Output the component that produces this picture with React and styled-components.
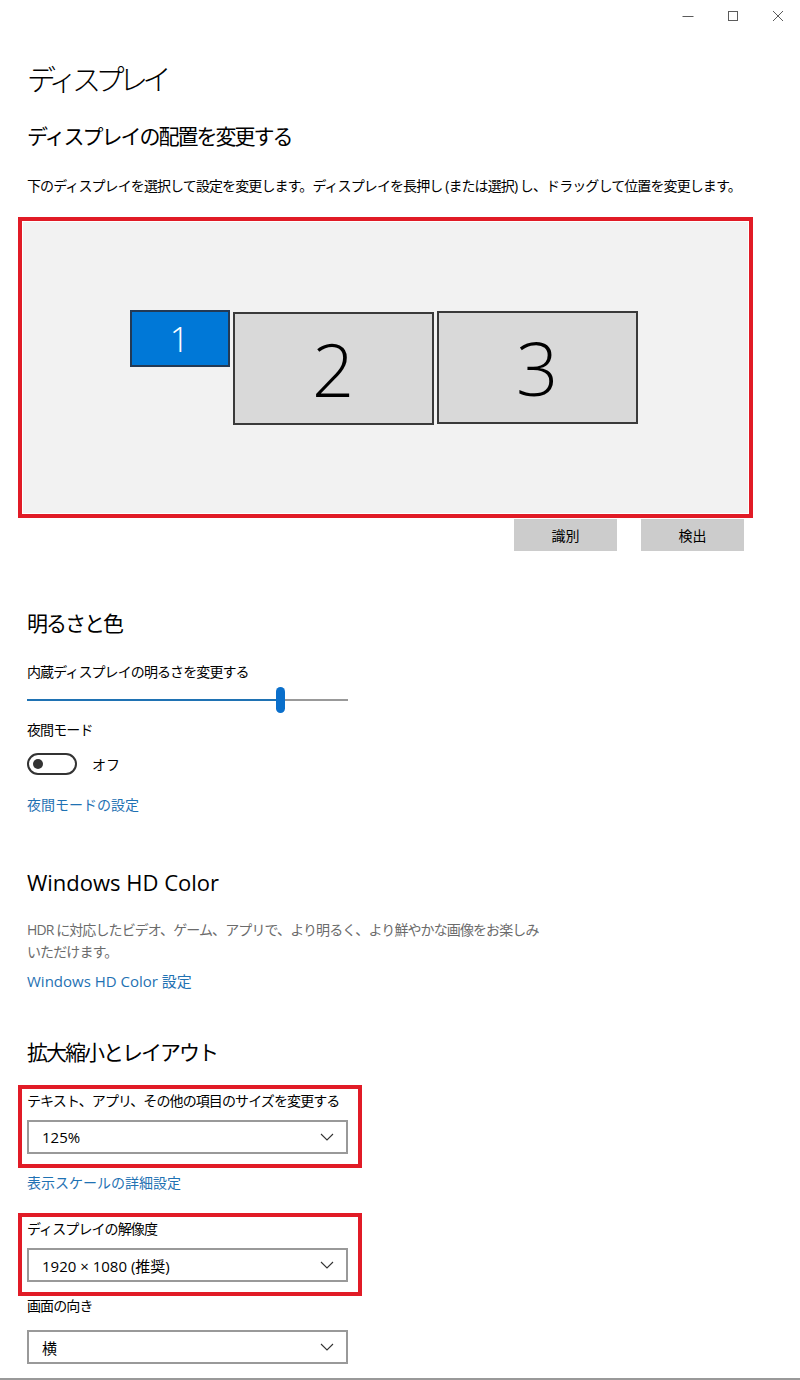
import React from 'react'
import styled, { createGlobalStyle } from 'styled-components'

const GlobalStyle = createGlobalStyle`
    html, body {
        margin: 0;
        padding: 0;
        background: #ffffff;
    }
    body {
        font-family: "Segoe UI", "Open Sans", "Noto Sans CJK JP", sans-serif;
        color: #000000;
    }
`

const font = `"Segoe UI", "Open Sans", "Noto Sans CJK JP", sans-serif`

function Display() {
    return (
        <>
            <GlobalStyle />
            <WindowStyled>
                <TitleBar>
                    <WinButton aria-label="minimize">
                        <svg width="12" height="12" viewBox="0 0 12 12">
                            <path d="M0.5 6.5h11" stroke="#333" strokeWidth="1" />
                        </svg>
                    </WinButton>
                    <WinButton aria-label="maximize">
                        <svg width="12" height="12" viewBox="0 0 12 12">
                            <rect x="1.5" y="1.5" width="9" height="9" fill="none" stroke="#333" strokeWidth="1" />
                        </svg>
                    </WinButton>
                    <WinButton aria-label="close">
                        <svg width="12" height="12" viewBox="0 0 12 12">
                            <path d="M1 1l10 10M11 1L1 11" stroke="#333" strokeWidth="1" />
                        </svg>
                    </WinButton>
                </TitleBar>

                <Content>
                    <PageTitle>ディスプレイ</PageTitle>
                    <Heading top={21}>ディスプレイの配置を変更する</Heading>
                    <Text top={25}>下のディスプレイを選択して設定を変更します。ディスプレイを長押し (または選択) し、ドラッグして位置を変更します。</Text>

                    <Highlight top={21}>
                        <Arrangement>
                            <Monitor selected w={100} h={57} size={34}>1</Monitor>
                            <Monitor w={201} h={113} size={74} offset={1}>2</Monitor>
                            <Monitor w={201} h={113} size={74}>3</Monitor>
                        </Arrangement>
                    </Highlight>
                    <ButtonRow>
                        <GreyButton>識別</GreyButton>
                        <GreyButton>検出</GreyButton>
                    </ButtonRow>

                    <Heading top={57}>明るさと色</Heading>
                    <Text top={24}>内蔵ディスプレイの明るさを変更する</Text>
                    <Slider>
                        <Track>
                            <Fill style={{ width: `${(253 / 321) * 100}%` }} />
                        </Track>
                        <Thumb style={{ left: 249 }} />
                    </Slider>
                    <Text top={7}>夜間モード</Text>
                    <ToggleRow>
                        <Toggle>
                            <Knob />
                        </Toggle>
                        <span>オフ</span>
                    </ToggleRow>
                    <Link top={20}>夜間モードの設定</Link>

                    <Heading top={52} latin>Windows HD Color</Heading>
                    <Text top={22} muted tall>
                        HDR に対応したビデオ、ゲーム、アプリで、より明るく、より鮮やかな画像をお楽しみ<br />いただけます。
                    </Text>
                    <Link top={8} size={15}>Windows HD Color 設定</Link>

                    <Heading top={46}>拡大縮小とレイアウト</Heading>
                    <Highlight top={18} narrow>
                        <Field>
                            <Text>テキスト、アプリ、その他の項目のサイズを変更する</Text>
                            <Select>
                                <span>125%</span>
                                <Chevron />
                            </Select>
                        </Field>
                    </Highlight>
                    <Link top={5}>表示スケールの詳細設定</Link>
                    <Highlight top={20} narrow>
                        <Field>
                            <Text>ディスプレイの解像度</Text>
                            <Select>
                                <span>1920 × 1080 (推奨)</span>
                                <Chevron />
                            </Select>
                        </Field>
                    </Highlight>
                    <Text>画面の向き</Text>
                    <Select top={14}>
                        <span>横</span>
                        <Chevron />
                    </Select>
                </Content>
            </WindowStyled>
        </>
    )
}

function Chevron() {
    return (
        <svg width="14" height="8" viewBox="0 0 14 8">
            <path d="M1 1l6 6 6-6" fill="none" stroke="#333" strokeWidth="1.1" />
        </svg>
    )
}

const WindowStyled = styled.div`
    width: 800px;
    height: 1380px;
    box-sizing: border-box;
    border-bottom: 2px solid #999999;
    overflow: hidden;
    background: #ffffff;
`

const TitleBar = styled.div`
    height: 32px;
    display: flex;
    justify-content: flex-end;
`

const WinButton = styled.div`
    width: 45px;
    height: 32px;
    display: flex;
    align-items: center;
    justify-content: center;
    opacity: 0.8;
`

const Content = styled.div`
    padding-left: 27px;
    display: flex;
    flex-direction: column;
    align-items: flex-start;
`

const PageTitle = styled.h1`
    margin: 28px 0 0;
    font-family: ${font};
    font-weight: 300;
    font-size: 29px;
    line-height: 40px;
    letter-spacing: -5.5px;
`

const Heading = styled.h2`
    margin: ${p => p.top || 0}px 0 0;
    font-family: ${font};
    font-weight: 400;
    font-size: ${p => (p.latin ? 22 : 21)}px;
    line-height: 30px;
    letter-spacing: ${p => (p.latin ? 0 : -2)}px;
`

const Text = styled.div`
    margin-top: ${p => p.top || 0}px;
    font-family: ${font};
    font-size: 14px;
    line-height: ${p => (p.tall ? 22 : 20)}px;
    letter-spacing: -0.9px;
    color: ${p => (p.muted ? '#6b6b6b' : '#000000')};
    white-space: nowrap;
`

const Link = styled(Text)`
    font-size: ${p => p.size || 14}px;
    letter-spacing: 0;
    color: #1f72b3;
`

const Highlight = styled.div`
    margin-top: ${p => p.top || 0}px;
    margin-left: -9px;
    width: ${p => (p.narrow ? 344 : 735)}px;
    box-sizing: border-box;
    border: 4px solid #e11b26;
    background: ${p => (p.narrow ? '#ffffff' : '#f2f2f2')};
    box-shadow: inset 0 0 0 1px #ffffff;
`

const Arrangement = styled.div`
    height: 293px;
    display: flex;
    justify-content: center;
    align-items: center;
    gap: 3px;
    padding-right: 4px;
`

const Monitor = styled.div`
    width: ${p => p.w}px;
    height: ${p => p.h}px;
    box-sizing: border-box;
    margin-top: ${p => (p.selected ? -58 : 0)}px;
    transform: translateY(${p => (p.offset || 0)}px);
    border: 2px solid ${p => (p.selected ? '#233a55' : '#3a3a3a')};
    background: ${p => (p.selected ? '#0078d7' : '#d9d9d9')};
    color: ${p => (p.selected ? '#ffffff' : '#000000')};
    display: flex;
    align-items: center;
    justify-content: center;
    font-family: "Segoe UI", "Open Sans", sans-serif;
    font-weight: 300;
    font-size: ${p => p.size}px;
`

const ButtonRow = styled.div`
    margin-top: 1px;
    width: 717px;
    display: flex;
    justify-content: flex-end;
    gap: 24px;
`

const GreyButton = styled.div`
    width: 103px;
    height: 32px;
    background: #cccccc;
    display: flex;
    align-items: center;
    justify-content: center;
    font-family: ${font};
    font-size: 14px;
`

const Slider = styled.div`
    position: relative;
    margin-top: 5px;
    width: 321px;
    height: 26px;
    display: flex;
    align-items: center;
`

const Track = styled.div`
    width: 100%;
    height: 2px;
    background: #999999;
`

const Fill = styled.div`
    height: 100%;
    background: #1f72b3;
`

const Thumb = styled.div`
    position: absolute;
    top: 0;
    width: 9px;
    height: 26px;
    border-radius: 5px;
    background: #0a6fcb;
`

const ToggleRow = styled.div`
    margin-top: 13px;
    display: flex;
    align-items: center;
    gap: 15px;
    font-family: ${font};
    font-size: 14px;
`

const Toggle = styled.div`
    width: 50px;
    height: 22px;
    box-sizing: border-box;
    border: 2px solid #333333;
    border-radius: 11px;
    display: flex;
    align-items: center;
    padding-left: 4px;
`

const Knob = styled.div`
    width: 10px;
    height: 10px;
    border-radius: 50%;
    background: #333333;
`

const Field = styled.div`
    padding: 2px 10px 10px 5px;
    display: flex;
    flex-direction: column;
    gap: 9px;
`

const Select = styled.div`
    margin-top: ${p => p.top || 0}px;
    width: 321px;
    height: 34px;
    box-sizing: border-box;
    border: 2px solid #999999;
    display: flex;
    align-items: center;
    justify-content: space-between;
    padding: 0 12px 0 13px;
    font-family: ${font};
    font-size: 15px;
`

export default Display
